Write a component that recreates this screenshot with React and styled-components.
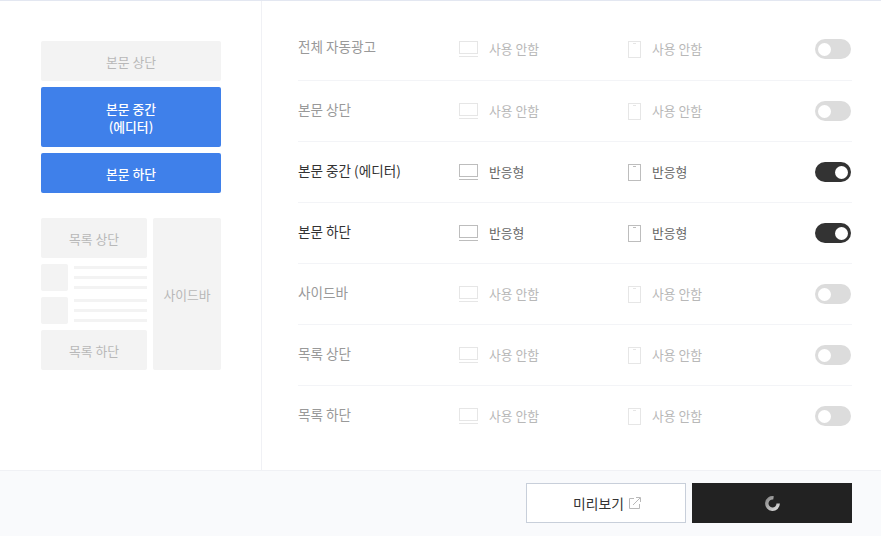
import React from "react";
import styled, { createGlobalStyle } from "styled-components";

const GlobalStyle = createGlobalStyle`
  html, body {
    margin: 0;
    padding: 0;
    background: #fff;
    font-family: "Noto Sans CJK KR", "Noto Sans", sans-serif;
  }
  * { box-sizing: border-box; }
`;

const Page = styled.div`
  width: 881px;
  height: 536px;
  display: flex;
  flex-direction: column;
  border-top: 1px solid #e3e7f1;
  overflow: hidden;
`;

const Body = styled.div`
  display: flex;
  height: 469px;
`;

const Preview = styled.aside`
  width: 262px;
  flex: none;
  padding: 40px 40px 0 41px;
  border-right: 1px solid #f0f1f5;
  display: flex;
  flex-direction: column;
  gap: 6px;
`;

const Slot = styled.div`
  height: ${(p) => p.$height || 40}px;
  padding-top: 1px;
  border-radius: 2px;
  display: flex;
  align-items: center;
  justify-content: center;
  text-align: center;
  font-size: 12.8px;
  line-height: 18px;
  font-weight: ${(p) => (p.$active ? 500 : 400)};
  background: ${(p) => (p.$active ? "#3f80ea" : "#f3f3f3")};
  color: ${(p) => (p.$active ? "#fff" : "#b8b8b8")};
`;

const ListArea = styled.div`
  margin-top: 19px;
  display: grid;
  grid-template-columns: 106px 68px;
  gap: 6px;
  height: 152px;
`;

const ListColumn = styled.div`
  display: flex;
  flex-direction: column;
  gap: 6px;
`;

const Article = styled.div`
  display: flex;
  gap: 6px;
  height: 27px;
`;

const Thumb = styled.div`
  width: 27px;
  height: 27px;
  flex: none;
  border-radius: 2px;
  background: #f3f3f3;
`;

const Lines = styled.div`
  flex: 1;
  display: flex;
  flex-direction: column;
  gap: 7px;
  padding-top: 2px;
`;

const Line = styled.span`
  display: block;
  height: 3px;
  background: #f3f3f3;
`;

const Settings = styled.section`
  flex: 1;
  padding: 19px 29px 0 36px;
`;

const RowName = styled.div`
  width: 161px;
  flex: none;
  font-size: 13.6px;
  position: relative;
  top: -2px;
  color: ${(p) => (p.$on ? "#333" : "#999")};
`;

const Row = styled.div`
  height: 61px;
  display: flex;
  align-items: center;
  border-bottom: 1px solid #f3f4f7;
  padding-right: 1px;

  &:first-child {
    padding-bottom: 2px;
  }
  &:first-child ${RowName} {
    top: -3px;
  }
  &:last-child {
    border-bottom: none;
    padding-bottom: 1px;
  }
`;

const Device = styled.div`
  width: ${(p) => p.$width}px;
  flex: none;
  display: flex;
  align-items: center;
  font-size: 12.8px;
  color: ${(p) => (p.$on ? "#666" : "#b8b8b8")};
  svg {
    flex: none;
    color: ${(p) => (p.$on ? "#bdbdbd" : "#e6e6e6")};
  }
`;

const DeviceText = styled.span`
  margin-left: ${(p) => p.$gap}px;
  position: relative;
  top: -1px;
`;

const Toggle = styled.div`
  width: 36px;
  height: 20px;
  margin-left: auto;
  border-radius: 10px;
  padding: 0 3px;
  display: flex;
  align-items: center;
  justify-content: ${(p) => (p.$on ? "flex-end" : "flex-start")};
  background: ${(p) => (p.$on ? "#333" : "#dcdcdc")};
`;

const Knob = styled.span`
  width: 13px;
  height: 13px;
  border-radius: 50%;
  background: #fff;
`;

const Footer = styled.footer`
  height: 66px;
  border-top: 1px solid #f0f1f5;
  background: #f9fafc;
  padding: 12px 29px 0 0;
  display: flex;
  justify-content: flex-end;
  gap: 6px;
`;

const PreviewButton = styled.button`
  width: 160px;
  height: 40px;
  padding: 0 0 0 2px;
  border: 1px solid #c8cfda;
  border-radius: 0;
  background: #fff;
  color: #333;
  font: 400 13.8px "Noto Sans CJK KR", sans-serif;
  display: flex;
  align-items: center;
  justify-content: center;
  gap: 5px;
`;

const SaveButton = styled.button`
  width: 160px;
  height: 40px;
  padding: 0;
  border: none;
  border-radius: 0;
  background: #222;
  display: flex;
  align-items: center;
  justify-content: center;
`;

const rows = [
  { name: "전체 자동광고" },
  { name: "본문 상단" },
  { name: "본문 중간 (에디터)", on: true },
  { name: "본문 하단", on: true },
  { name: "사이드바" },
  { name: "목록 상단" },
  { name: "목록 하단" },
];

function LaptopIcon() {
  return (
    <svg width="20" height="17" viewBox="0 0 20 17" fill="none" stroke="currentColor">
      <rect x="0.5" y="0.5" width="18" height="12" />
      <path d="M0 15.5h19" />
    </svg>
  );
}

function PhoneIcon() {
  return (
    <svg width="13" height="17" viewBox="0 0 13 17" fill="none" stroke="currentColor">
      <rect x="0.5" y="0.5" width="12" height="16" />
      <path d="M5 2.5h3" />
    </svg>
  );
}

function ExternalIcon() {
  return (
    <svg width="12" height="12" viewBox="0 0 12 12" fill="none" stroke="#b9b9b9">
      <path d="M5 1.5H.5v10h10V7" />
      <path d="M4 8l7-7M7 .5h4.5V5" />
    </svg>
  );
}

function Spinner() {
  return (
    <svg width="15" height="15" viewBox="0 0 15 15" fill="none">
      <defs>
        <linearGradient id="spin" x1="0" y1="0" x2="1" y2="1">
          <stop offset="0" stopColor="#8a8a8a" />
          <stop offset="1" stopColor="#d8d8d8" />
        </linearGradient>
      </defs>
      <path d="M8.5 1.9A5.7 5.7 0 1 0 13.2 7.5" stroke="url(#spin)" strokeWidth="3.4" />
    </svg>
  );
}

function ArticleStub() {
  return (
    <Article>
      <Thumb />
      <Lines>
        <Line />
        <Line />
        <Line />
      </Lines>
    </Article>
  );
}

export default function App() {
  return (
    <>
      <GlobalStyle />
      <Page>
        <Body>
          <Preview>
            <Slot>본문 상단</Slot>
            <Slot $active $height={60}>
              본문 중간
              <br />
              (에디터)
            </Slot>
            <Slot $active>본문 하단</Slot>
            <ListArea>
              <ListColumn>
                <Slot>목록 상단</Slot>
                <ArticleStub />
                <ArticleStub />
                <Slot>목록 하단</Slot>
              </ListColumn>
              <Slot $height={152}>사이드바</Slot>
            </ListArea>
          </Preview>
          <Settings>
            {rows.map((row) => (
              <Row key={row.name}>
                <RowName $on={row.on}>{row.name}</RowName>
                <Device $width={169} $on={row.on}>
                  <LaptopIcon />
                  <DeviceText $gap={10}>{row.on ? "반응형" : "사용 안함"}</DeviceText>
                </Device>
                <Device $width={150} $on={row.on}>
                  <PhoneIcon />
                  <DeviceText $gap={11}>{row.on ? "반응형" : "사용 안함"}</DeviceText>
                </Device>
                <Toggle $on={row.on}>
                  <Knob />
                </Toggle>
              </Row>
            ))}
          </Settings>
        </Body>
        <Footer>
          <PreviewButton>
            미리보기
            <ExternalIcon />
          </PreviewButton>
          <SaveButton aria-label="저장 중">
            <Spinner />
          </SaveButton>
        </Footer>
      </Page>
    </>
  );
}
